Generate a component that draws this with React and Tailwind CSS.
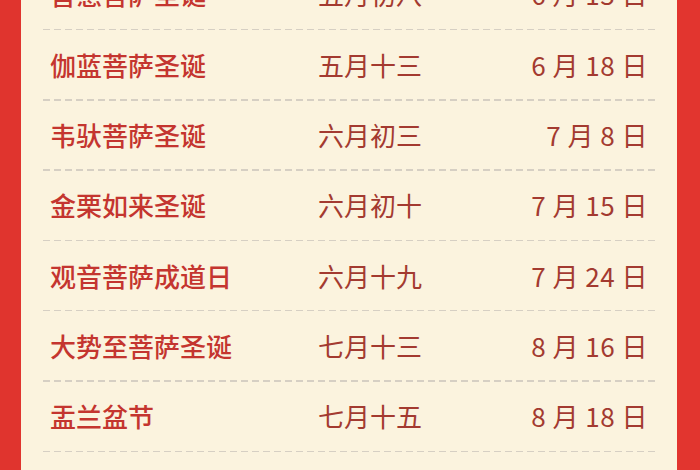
const rows = [
  ["善慧菩萨圣诞", "五月初八", "6 月 13 日"],
  ["伽蓝菩萨圣诞", "五月十三", "6 月 18 日"],
  ["韦驮菩萨圣诞", "六月初三", "7 月 8 日"],
  ["金栗如来圣诞", "六月初十", "7 月 15 日"],
  ["观音菩萨成道日", "六月十九", "7 月 24 日"],
  ["大势至菩萨圣诞", "七月十三", "8 月 16 日"],
  ["盂兰盆节", "七月十五", "8 月 18 日"],
  ["", "", ""],
];

export default function App() {
  return (
    <div
      className="w-[700px] h-[470px] overflow-hidden flex bg-[#e2352f]"
      style={{ fontFamily: '"Noto Sans CJK SC", "Noto Sans", sans-serif' }}
    >
      <div className="w-[21px] shrink-0 bg-[#e0342e]" />
      <div className="w-[656px] shrink-0 bg-[#fbf3de] pl-[22px] pr-[20px]">
        <div className="-mt-[40px] flex flex-col">
          {rows.map((r, i) => (
            <div key={i} className="flex flex-col">
              <div className="h-[68.8px] flex items-center pl-[7px] pr-[9px] text-[26px] leading-none">
                <div className="w-[268px] font-medium text-[#c4352f]">{r[0]}</div>
                <div className="w-[150px] text-[#a33a30]">{r[1]}</div>
                <div className="flex-1 text-right text-[#a33a30] tracking-[0.5px]">{r[2]}</div>
              </div>
              <div className="h-[1.5px] bg-[repeating-linear-gradient(90deg,#d6cfc3_0_7px,transparent_7px_11px)]" />
            </div>
          ))}
        </div>
      </div>
      <div className="flex-1 bg-[#e2352f]" />
    </div>
  );
}
